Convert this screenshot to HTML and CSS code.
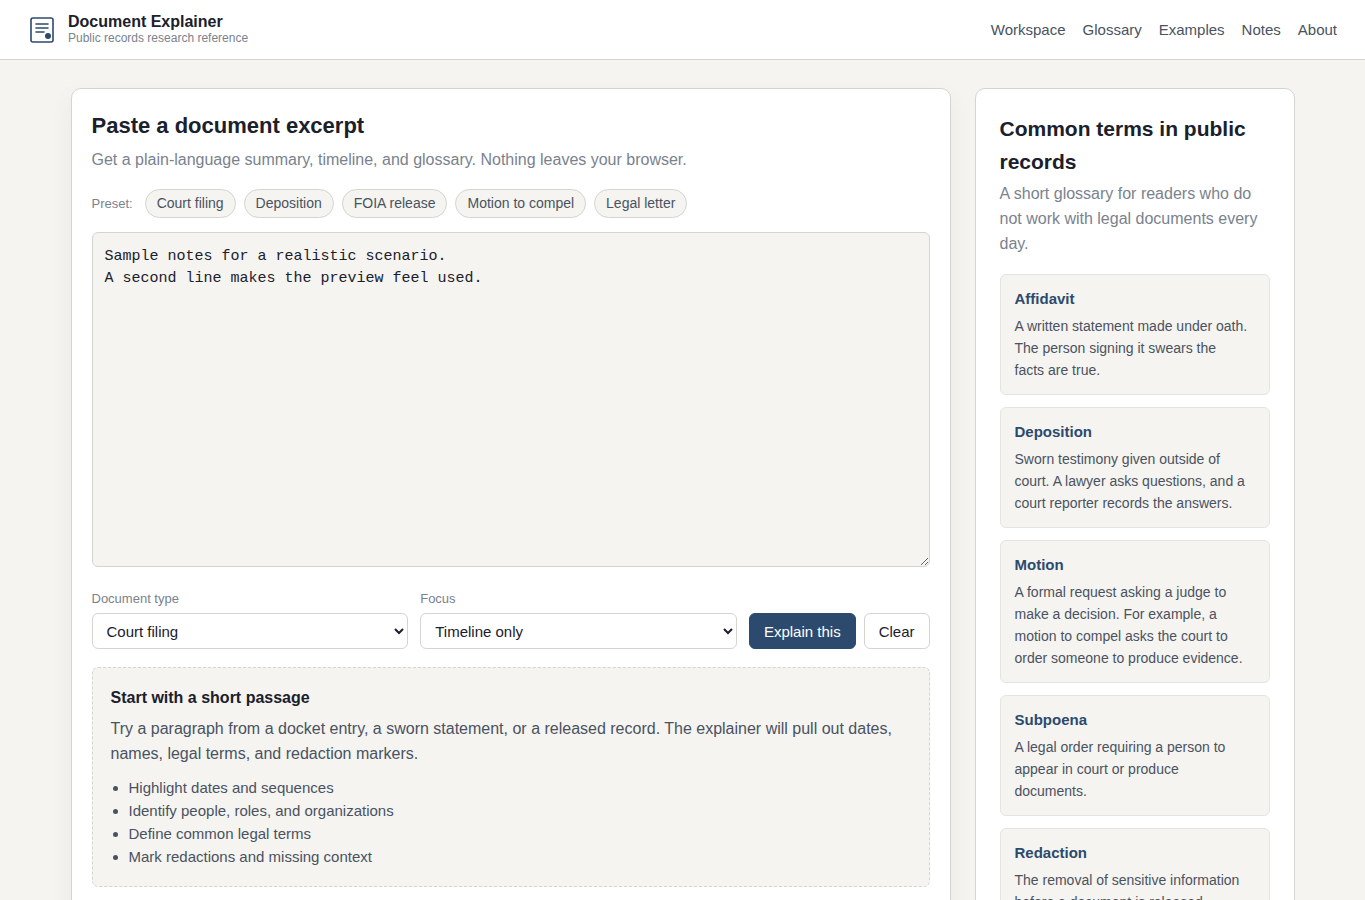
FILE: index.html
```
<!DOCTYPE html>
<html lang="en">
<head>
	<meta charset="utf-8">
	<meta name="viewport" content="width=device-width, initial-scale=1">
	<title>Document Explainer</title>
	<link rel="stylesheet" href="styles.css">
</head>
<body>
	<header class="site-header">
		<div class="brand">
			<svg class="logo" viewBox="0 0 28 28" aria-hidden="true">
				<rect x="3" y="2" width="22" height="24" rx="2" fill="none" stroke="#2c4a6e" stroke-width="1.6"/>
				<path d="M8 8h12M8 12h12M8 16h8" fill="none" stroke="#2c4a6e" stroke-width="1.6" stroke-linecap="round"/>
				<circle cx="20" cy="20" r="3" fill="#2c4a6e"/>
			</svg>
			<div>
				<div class="brand-name">Document Explainer</div>
				<div class="brand-tag">Public records research reference</div>
			</div>
		</div>
		<nav class="nav">
			<a href="#workspace">Workspace</a>
			<a href="#glossary">Glossary</a>
			<a href="#examples">Examples</a>
			<a href="#notes">Notes</a>
			<a href="#about">About</a>
		</nav>
	</header>

	<div class="layout">
		<main class="panel workspace" id="workspace">
			<h1>Paste a document excerpt</h1>
			<p class="lead">Get a plain-language summary, timeline, and glossary. Nothing leaves your browser.</p>

			<div class="presets">
				<span class="preset-label">Preset:</span>
				<button type="button" class="chip">Court filing</button>
				<button type="button" class="chip">Deposition</button>
				<button type="button" class="chip">FOIA release</button>
				<button type="button" class="chip">Motion to compel</button>
				<button type="button" class="chip">Legal letter</button>
			</div>

			<textarea class="excerpt" aria-label="Document excerpt">Sample notes for a realistic scenario.
A second line makes the preview feel used.</textarea>

			<div class="controls">
				<div class="field">
					<label for="doc-type">Document type</label>
					<select id="doc-type">
						<option>Court filing</option>
						<option>Deposition</option>
						<option>FOIA release</option>
						<option>Legal letter</option>
					</select>
				</div>
				<div class="field">
					<label for="focus">Focus</label>
					<select id="focus">
						<option>Timeline only</option>
						<option>Plain summary</option>
					</select>
				</div>
				<div class="actions">
					<button type="button" class="btn btn-primary">Explain this</button>
					<button type="button" class="btn">Clear</button>
				</div>
			</div>

			<section class="empty">
				<h2>Start with a short passage</h2>
				<p>Try a paragraph from a docket entry, a sworn statement, or a released record. The explainer will pull out dates, names, legal terms, and redaction markers.</p>
				<ul>
					<li>Highlight dates and sequences</li>
					<li>Identify people, roles, and organizations</li>
					<li>Define common legal terms</li>
					<li>Mark redactions and missing context</li>
				</ul>
			</section>
		</main>

		<aside class="panel glossary" id="glossary">
			<h2>Common terms in public records</h2>
			<p class="lead">A short glossary for readers who do not work with legal documents every day.</p>
			<div class="terms">
				<article class="term">
					<h3>Affidavit</h3>
					<p>A written statement made under oath. The person signing it swears the facts are true.</p>
				</article>
				<article class="term">
					<h3>Deposition</h3>
					<p>Sworn testimony given outside of court. A lawyer asks questions, and a court reporter records the answers.</p>
				</article>
				<article class="term">
					<h3>Motion</h3>
					<p>A formal request asking a judge to make a decision. For example, a motion to compel asks the court to order someone to produce evidence.</p>
				</article>
				<article class="term">
					<h3>Subpoena</h3>
					<p>A legal order requiring a person to appear in court or produce documents.</p>
				</article>
				<article class="term">
					<h3>Redaction</h3>
					<p>The removal of sensitive information before a document is released.</p>
				</article>
			</div>
		</aside>
	</div>
</body>
</html>
```

FILE: styles.css
```
* {
	box-sizing: border-box;
}

body {
	margin: 0;
	background: #f5f4f0;
	color: #1a202c;
	font-family: "Liberation Sans", Arial, sans-serif;
	font-size: 16px;
	line-height: 25px;
}

h1, h2, h3, p, ul {
	margin: 0;
}

button, select {
	font-family: inherit;
}

/* Header */
.site-header {
	display: flex;
	align-items: center;
	justify-content: space-between;
	padding: 13px 28px;
	background: #fff;
	border-bottom: 1px solid #d4d4d0;
}

.brand {
	display: flex;
	align-items: center;
	gap: 12px;
}

.logo {
	width: 28px;
	height: 28px;
}

.brand-name {
	font-weight: bold;
	line-height: 18px;
}

.brand-tag {
	color: #7a828e;
	font-size: 12px;
	line-height: 15px;
}

.nav {
	display: flex;
	gap: 17px;
}

.nav a {
	color: #4a5261;
	font-size: 15px;
	line-height: 23px;
	text-decoration: none;
}

/* Page columns */
.layout {
	display: grid;
	grid-template-columns: minmax(0, 1fr) 320px;
	gap: 24px;
	max-width: 1280px;
	margin: 0 auto;
	padding: 28px;
}

.panel {
	background: #fff;
	border: 1px solid #d4d4d0;
	border-radius: 10px;
}

.lead {
	color: #7a828e;
}

/* Workspace */
.workspace {
	padding: 20px;
	box-shadow: 0 8px 24px rgba(0, 0, 0, 0.05);
}

.workspace h1 {
	margin-bottom: 4px;
	font-size: 22px;
	line-height: 34px;
}

.presets {
	display: flex;
	flex-wrap: wrap;
	align-items: center;
	gap: 8px;
	margin: 17px 0 14px;
	line-height: 20px;
}

.preset-label {
	margin-right: 4px;
	color: #7a828e;
	font-size: 13px;
}

.chip {
	padding: 6px 11px;
	border: 1px solid #d4d4d0;
	border-radius: 999px;
	background: #f5f4f0;
	color: #4a5261;
	font-size: 14px;
	line-height: 15px;
}

.excerpt {
	display: block;
	width: 100%;
	height: 335px;
	margin-bottom: 22px;
	padding: 13px 12px;
	border: 1px solid #d4d4d0;
	border-radius: 6px;
	background: #f5f4f0;
	color: #1a202c;
	font-family: "Liberation Mono", "Courier New", monospace;
	font-size: 15px;
	line-height: 22px;
	resize: vertical;
}

.controls {
	display: grid;
	grid-template-columns: 1fr 1fr auto;
	align-items: end;
	gap: 12px;
	margin-bottom: 18px;
}

.field {
	display: grid;
	gap: 4px;
}

.field label {
	color: #7a828e;
	font-size: 13px;
	line-height: 20px;
}

.field select {
	width: 100%;
	height: 36px;
	padding: 0 10px;
	border: 1px solid #d4d4d0;
	border-radius: 6px;
	background: #fff;
	color: #1a202c;
	font-size: 15px;
}

.actions {
	display: flex;
	gap: 8px;
}

.btn {
	height: 36px;
	padding: 0 14px;
	border: 1px solid #d4d4d0;
	border-radius: 6px;
	background: #fff;
	color: #1a202c;
	font-size: 15px;
}

.btn-primary {
	border-color: #2c4a6e;
	background: #2c4a6e;
	color: #fff;
}

.empty {
	padding: 18px;
	border: 1px dashed #d4d4d0;
	border-radius: 6px;
	background: #f5f4f0;
	color: #4a5261;
}

.empty h2 {
	margin-bottom: 6px;
	color: #1a202c;
	font-size: 16px;
	line-height: 24px;
}

.empty ul {
	margin-top: 10px;
	padding-left: 18px;
	font-size: 15px;
	line-height: 23px;
}

/* Glossary */
.glossary {
	padding: 23px 24px;
}

.glossary h2 {
	margin-bottom: 3px;
	font-size: 21px;
	line-height: 33px;
}

.terms {
	display: grid;
	gap: 12px;
	margin-top: 18px;
}

.term {
	padding: 12px 20px 13px 14px;
	border: 1px solid #e4e4e0;
	border-radius: 6px;
	background: #f5f4f0;
}

.term h3 {
	margin-bottom: 4px;
	color: #2c4a6e;
	font-size: 15px;
	line-height: 24px;
}

.term p {
	color: #4a5261;
	font-size: 14px;
	line-height: 22px;
}
```
